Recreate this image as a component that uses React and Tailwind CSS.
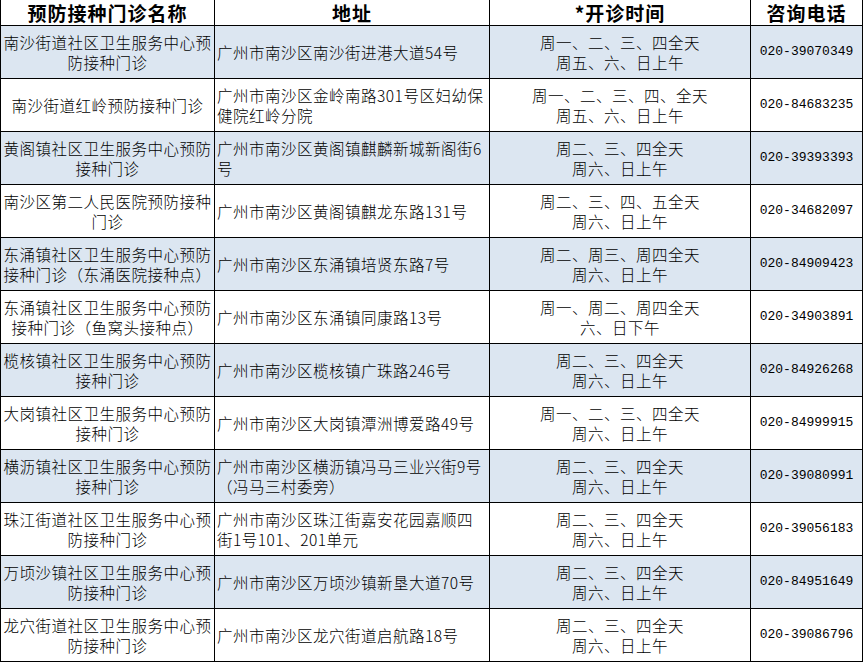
import React from "react";

const rows = [
  {
    name: ["南沙街道社区卫生服务中心预", "防接种门诊"],
    addr: ["广州市南沙区南沙街进港大道54号"],
    time: ["周一、二、三、四全天", "周五、六、日上午"],
    tel: "020-39070349",
  },
  {
    name: ["南沙街道红岭预防接种门诊"],
    addr: ["广州市南沙区金岭南路301号区妇幼保", "健院红岭分院"],
    time: ["周一、二、三、四、全天", "周五、六、日上午"],
    tel: "020-84683235",
  },
  {
    name: ["黄阁镇社区卫生服务中心预防", "接种门诊"],
    addr: ["广州市南沙区黄阁镇麒麟新城新阁街6", "号"],
    time: ["周二、三、四全天", "周六、日上午"],
    tel: "020-39393393",
  },
  {
    name: ["南沙区第二人民医院预防接种", "门诊"],
    addr: ["广州市南沙区黄阁镇麒龙东路131号"],
    time: ["周二、三、四、五全天", "周六、日上午"],
    tel: "020-34682097",
  },
  {
    name: ["东涌镇社区卫生服务中心预防", "接种门诊（东涌医院接种点）"],
    addr: ["广州市南沙区东涌镇培贤东路7号"],
    time: ["周二、周三、周四全天", "周六、日上午"],
    tel: "020-84909423",
  },
  {
    name: ["东涌镇社区卫生服务中心预防", "接种门诊（鱼窝头接种点）"],
    addr: ["广州市南沙区东涌镇同康路13号"],
    time: ["周一、周二、周四全天", "六、日下午"],
    tel: "020-34903891",
  },
  {
    name: ["榄核镇社区卫生服务中心预防", "接种门诊"],
    addr: ["广州市南沙区榄核镇广珠路246号"],
    time: ["周二、三、四全天", "周六、日上午"],
    tel: "020-84926268",
  },
  {
    name: ["大岗镇社区卫生服务中心预防", "接种门诊"],
    addr: ["广州市南沙区大岗镇潭洲博爱路49号"],
    time: ["周一、二、三、四全天", "周六、日上午"],
    tel: "020-84999915",
  },
  {
    name: ["横沥镇社区卫生服务中心预防", "接种门诊"],
    addr: ["广州市南沙区横沥镇冯马三业兴街9号", "（冯马三村委旁）"],
    time: ["周二、三、四全天", "周六、日上午"],
    tel: "020-39080991",
  },
  {
    name: ["珠江街道社区卫生服务中心预", "防接种门诊"],
    addr: ["广州市南沙区珠江街嘉安花园嘉顺四", "街1号101、201单元"],
    time: ["周二、三、四全天", "周六、日上午"],
    tel: "020-39056183",
  },
  {
    name: ["万顷沙镇社区卫生服务中心预", "防接种门诊"],
    addr: ["广州市南沙区万顷沙镇新垦大道70号"],
    time: ["周二、三、四全天", "周六、日上午"],
    tel: "020-84951649",
  },
  {
    name: ["龙穴街道社区卫生服务中心预", "防接种门诊"],
    addr: ["广州市南沙区龙穴街道启航路18号"],
    time: ["周二、三、四全天", "周六、日上午"],
    tel: "020-39086796",
  },
];

const cjk = "font-['Noto_Sans_CJK_SC',sans-serif]";

function Lines({ lines }) {
  return lines.map((l, i) => (
    <div key={i} className="whitespace-nowrap">
      {l}
    </div>
  ));
}

export default function App() {
  return (
    <div className={`w-[863px] h-[662px] bg-white ${cjk} text-black`}>
      <div className="grid grid-cols-[213px_274px_260px_111px] grid-rows-[25px_repeat(12,52px)] gap-px bg-black px-px pb-px">
        {/* header */}
        {["预防接种门诊名称", "地址", "*开诊时间", "咨询电话"].map((h) => (
          <div
            key={h}
            className="bg-white flex items-center justify-center text-[19px] font-bold leading-none tracking-[1px]"
          >
            {h}
          </div>
        ))}

        {rows.map((r, i) => {
          const bg = i % 2 === 0 ? "bg-[#dce6f1]" : "bg-white";
          return (
            <React.Fragment key={i}>
              <div className={`${bg} flex flex-col items-center justify-center text-center text-[15.5px] font-light leading-[20px] tracking-[0.5px]`}>
                <Lines lines={r.name} />
              </div>
              <div className={`${bg} flex flex-col justify-center pl-[2px] text-[15.5px] font-light leading-[20px] tracking-[0.5px]`}>
                <Lines lines={r.addr} />
              </div>
              <div className={`${bg} flex flex-col items-center justify-center text-center text-[15.5px] font-light leading-[20px] tracking-[0.5px]`}>
                <Lines lines={r.time} />
              </div>
              <div className={`${bg} flex items-center justify-center font-['Liberation_Mono',monospace] text-[13px]`}>
                {r.tel}
              </div>
            </React.Fragment>
          );
        })}
      </div>
    </div>
  );
}
